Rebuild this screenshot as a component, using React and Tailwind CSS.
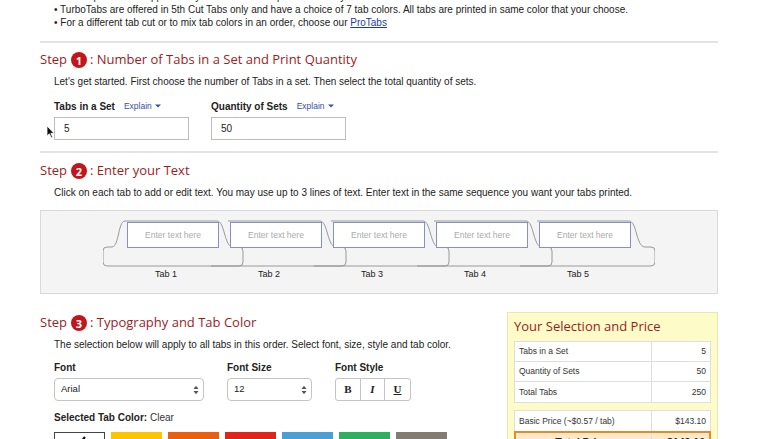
import React from "react";

function Caret() {
  return (
    <svg width="6" height="4" viewBox="0 0 6 4" className="ml-[3px]">
      <path d="M0 0.5 L6 0.5 L3 3.5 Z" fill="#3b4fa3" />
    </svg>
  );
}

function Updown() {
  return (
    <svg width="6" height="10" viewBox="0 0 6 10">
      <path d="M0.5 4 L5.5 4 L3 0.8 Z" fill="#555" />
      <path d="M0.5 6 L5.5 6 L3 9.2 Z" fill="#555" />
    </svg>
  );
}

function StepHeading({ n, title, className = "" }) {
  return (
    <div
      className={
        "flex items-center h-[20px] font-['Open_Sans',sans-serif] text-[13px] text-[#9b1c1f] " +
        className
      }
    >
      <span>Step</span>
      <span className="ml-[4px] w-[16px] h-[16px] rounded-full bg-[#c3161c] text-white text-[11px] font-bold leading-none flex items-center justify-center">
        {n}
      </span>
      <span className="ml-[3px] whitespace-pre">: {title}</span>
    </div>
  );
}

function tabPath(i) {
  const L = 24 + 103 * i;
  const right =
    `L ${L + 90} 10 C ${L + 98} 10 ${L + 97} 36 ${L + 106} 36 ` +
    `L ${L + 112} 36 Q ${L + 116} 36 ${L + 116} 40 L ${L + 116} 51 ` +
    `Q ${L + 116} 55 ${L + 112} 55 `;
  if (i === 0) {
    return (
      `M ${L - 24} 51 L ${L - 24} 40 Q ${L - 24} 36 ${L - 20} 36 L ${L - 15} 36 ` +
      `C ${L - 8} 36 ${L - 9} 10 ${L - 2} 10 ` +
      right +
      `L ${L - 20} 55 Q ${L - 24} 55 ${L - 24} 51 Z`
    );
  }
  return `M ${L - 2} 10 ` + right + `L ${L - 19} 55`;
}

function Tabs() {
  const tabs = [0, 1, 2, 3, 4];
  return (
    <div className="relative ml-[62px] w-[552px] h-[82px]">
      <svg
        className="absolute left-0 top-0"
        width="552"
        height="60"
        viewBox="0 0 552 60"
      >
        {tabs.map((i) => (
          <path
            key={i}
            d={tabPath(i)}
            fill="none"
            stroke="#8e8e8e"
            strokeWidth="0.9"
          />
        ))}
      </svg>
      <div className="relative flex pl-[24px] pt-[11px]">
        {tabs.map((i) => (
          <div key={i} className="w-[103px] shrink-0">
            <div className="w-[92px] h-[26px] bg-white border border-[#8790c2] flex items-center justify-center text-[8.5px] text-[#aaa]">
              Enter text here
            </div>
            <div className="mt-[20px] w-[92px] pr-[14px] text-center text-[9px] leading-[12px] text-[#222]">
              Tab {i + 1}
            </div>
          </div>
        ))}
      </div>
    </div>
  );
}

function Row({ label, value, last }) {
  return (
    <div
      className={
        "flex h-[20px] bg-white text-[8.5px] text-[#333] " +
        (last ? "" : "border-b border-[#dedede]")
      }
    >
      <div className="w-[137px] border-r border-[#dedede] pl-[4px] flex items-center">
        {label}
      </div>
      <div className="flex-1 pr-[4px] flex items-center justify-end">
        {value}
      </div>
    </div>
  );
}

export default function App() {
  const swatches = [
    "#fbc500",
    "#eb5e0b",
    "#e2231a",
    "#4aa0d5",
    "#2eb15f",
    "#827c73",
  ];
  return (
    <div className="w-[780px] h-[439px] overflow-hidden bg-white text-[#222] font-['Liberation_Sans',Arial,sans-serif]">
      <div className="ml-[40px] w-[678px]">
        <ul className="-mt-[10px] pl-[14px] text-[10px] leading-[13px]">
          <li>• Orders placed and approved by 12 noon EST ship the same day.</li>
          <li>
            • TurboTabs are offered in 5th Cut Tabs only and have a choice of 7
            tab colors. All tabs are printed in same color that your choose.
          </li>
          <li>
            • For a different tab cut or to mix tab colors in an order, choose
            our{" "}
            <span className="text-[#1a3d9c] underline">ProTabs</span>
          </li>
        </ul>
        <div className="mt-[12px] h-[2px] bg-[#e3e3e3]" />

        <StepHeading
          n={1}
          title="Number of Tabs in a Set and Print Quantity"
          className="mt-[7px]"
        />
        <div className="pl-[14px]">
          <p className="mt-[5px] text-[10px] leading-[14px]">
            Let's get started. First choose the number of Tabs in a set. Then
            select the total quantity of sets.
          </p>
          <div className="relative mt-[10px] flex">
            <div className="w-[157px]">
              <div className="flex items-center h-[14px]">
                <span className="text-[10px] font-bold">Tabs in a Set</span>
                <span className="ml-[9px] text-[8.5px] text-[#3b4fa3]">
                  Explain
                </span>
                <Caret />
              </div>
              <div className="mt-[4px] w-[135px] h-[23px] border border-[#bdbdbd] pl-[9px] flex items-center text-[10px]">
                5
              </div>
            </div>
            <div>
              <div className="flex items-center h-[14px]">
                <span className="text-[10px] font-bold">Quantity of Sets</span>
                <span className="ml-[9px] text-[8.5px] text-[#3b4fa3]">
                  Explain
                </span>
                <Caret />
              </div>
              <div className="mt-[4px] w-[135px] h-[23px] border border-[#bdbdbd] pl-[9px] flex items-center text-[10px]">
                50
              </div>
            </div>
            <svg
              className="absolute left-[-8px] top-[26px]"
              width="9"
              height="14"
              viewBox="0 0 9 14"
            >
              <path
                d="M1 1 L1 11 L3.4 8.8 L5.2 12.8 L6.6 12.2 L4.9 8.3 L8 8.3 Z"
                fill="#111"
                stroke="#fff"
                strokeWidth="0.8"
              />
            </svg>
          </div>
        </div>
        <div className="mt-[11px] h-[2px] bg-[#e3e3e3]" />

        <StepHeading n={2} title="Enter your Text" className="mt-[8px]" />
        <p className="mt-[5px] pl-[14px] text-[10px] leading-[14px]">
          Click on each tab to add or edit text. You may use up to 3 lines of
          text. Enter text in the same sequence you want your tabs printed.
        </p>
        <div className="mt-[10px] h-[84px] bg-[#f4f4f4] border border-[#d9d9d9]">
          <Tabs />
        </div>

        <div className="mt-[18px] flex">
          <div className="flex-1 pt-[1px]">
            <StepHeading n={3} title="Typography and Tab Color" />
            <div className="pl-[14px]">
              <p className="mt-[5px] text-[10px] leading-[14px]">
                The selection below will apply to all tabs in this order.
                Select font, size, style and tab color.
              </p>
              <div className="mt-[9px] flex">
                <div className="w-[173px]">
                  <div className="h-[14px] text-[10px] font-bold leading-[14px]">
                    Font
                  </div>
                  <div className="mt-[3px] w-[150px] h-[23px] border border-[#c4c4c4] rounded-[4px] pl-[6px] pr-[4px] flex items-center justify-between text-[9.5px]">
                    <span>Arial</span>
                    <Updown />
                  </div>
                </div>
                <div className="w-[108px]">
                  <div className="h-[14px] text-[10px] font-bold leading-[14px]">
                    Font Size
                  </div>
                  <div className="mt-[3px] w-[85px] h-[23px] border border-[#c4c4c4] rounded-[4px] pl-[6px] pr-[4px] flex items-center justify-between text-[9.5px]">
                    <span>12</span>
                    <Updown />
                  </div>
                </div>
                <div>
                  <div className="h-[14px] text-[10px] font-bold leading-[14px]">
                    Font Style
                  </div>
                  <div className="mt-[3px] h-[23px] w-[76px] border border-[#c4c4c4] rounded-[3px] flex font-['Liberation_Serif',serif] text-[11px] font-bold text-[#222]">
                    <div className="w-[25px] flex items-center justify-center border-r border-[#c4c4c4]">
                      B
                    </div>
                    <div className="w-[24px] flex items-center justify-center border-r border-[#c4c4c4] italic">
                      I
                    </div>
                    <div className="flex-1 flex items-center justify-center underline">
                      U
                    </div>
                  </div>
                </div>
              </div>
              <div className="mt-[10px] h-[14px] text-[10px] leading-[14px]">
                <span className="font-bold">Selected Tab Color:</span>{" "}
                <span className="text-[#333]">Clear</span>
              </div>
              <div className="mt-[7px] flex gap-[6px]">
                <div className="w-[51px] h-[30px] border border-[#444] bg-white flex justify-center pt-[2px]">
                  <svg width="14" height="12" viewBox="0 0 14 12">
                    <path
                      d="M2 6 L5.5 9.5 L12 2"
                      fill="none"
                      stroke="#111"
                      strokeWidth="2.2"
                    />
                  </svg>
                </div>
                {swatches.map((c) => (
                  <div
                    key={c}
                    className="w-[51px] h-[30px]"
                    style={{ backgroundColor: c }}
                  />
                ))}
              </div>
            </div>
          </div>

          <div className="w-[211px] shrink-0 bg-[#fdfbc8] border border-[#ebe7b3] px-[6px] pt-[4px] pb-[8px]">
            <div className="h-[18px] leading-[18px] font-['Open_Sans',sans-serif] text-[13px] text-[#9b1c1f]">
              Your Selection and Price
            </div>
            <div className="mt-[6px] border border-[#dedede]">
              <Row label="Tabs in a Set" value="5" />
              <Row label="Quantity of Sets" value="50" />
              <Row label="Total Tabs" value="250" last />
            </div>
            <div className="mt-[7px] border border-[#dedede] border-b-0">
              <Row label="Basic Price (~$0.57 / tab)" value="$143.10" last />
            </div>
            <div className="flex h-[24px] bg-[#fbe9c9] border-2 border-[#e38b2c] text-[10.5px] font-bold text-[#222]">
              <div className="w-[136px] border-r border-[#dedede] flex items-center justify-center">
                Total Price:
              </div>
              <div className="flex-1 pr-[4px] flex items-center justify-end">
                $143.10
              </div>
            </div>
          </div>
        </div>
      </div>
    </div>
  );
}
